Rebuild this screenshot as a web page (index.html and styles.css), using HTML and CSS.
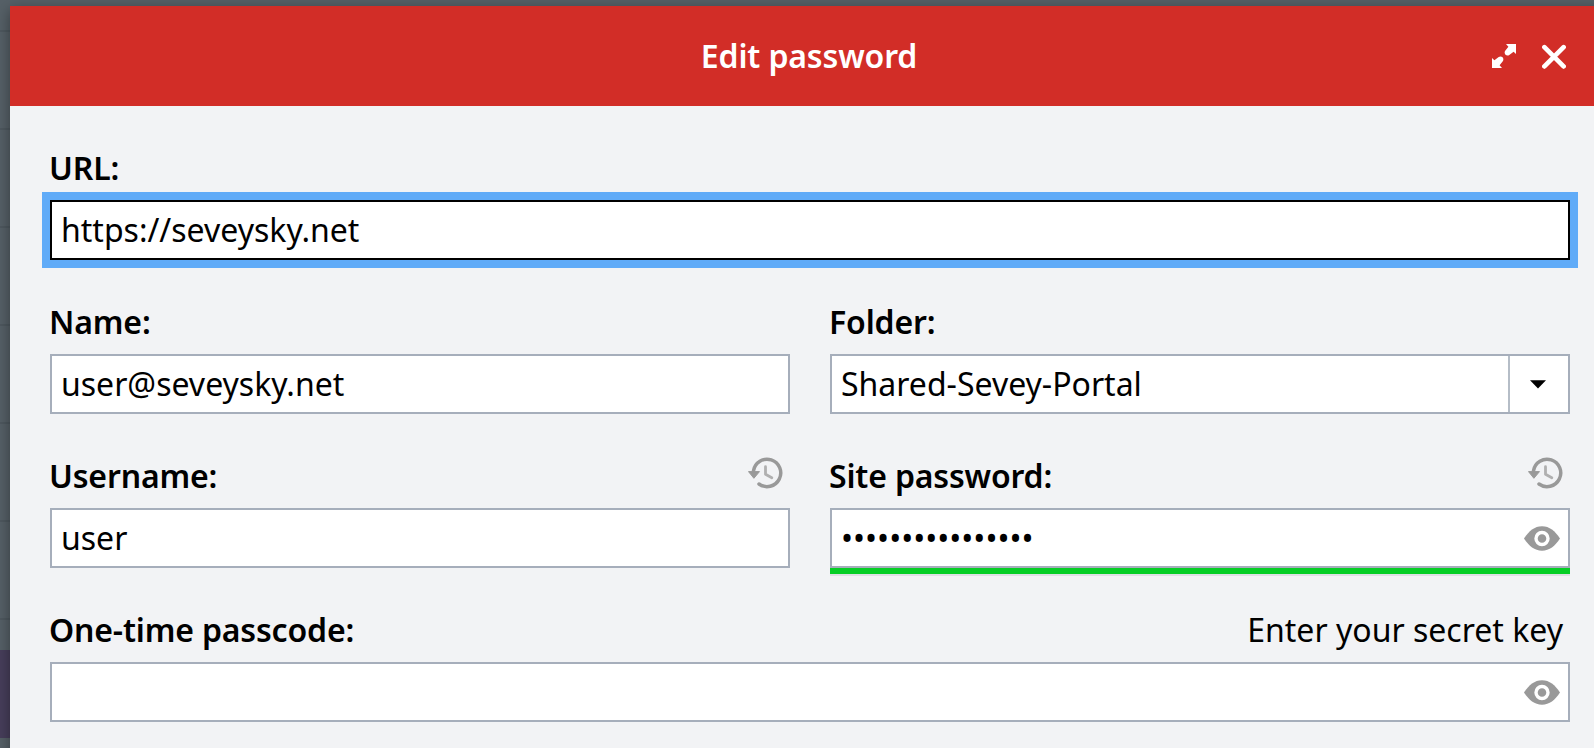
FILE: index.html
```html
<!DOCTYPE html>
<html lang="en">
<head>
<meta charset="utf-8">
<title>Edit password</title>
<link rel="stylesheet" href="styles.css">
</head>
<body>
<svg class="defs" width="0" height="0" aria-hidden="true">
  <symbol id="history" viewBox="0 0 36 32">
    <path d="M5.500 13.700A13.700 13.700 0 1 1 11 27" fill="none" stroke="#999" stroke-width="3.500" stroke-linecap="round"/>
    <path d="M.5 14.600h11L5.900 21.300z" fill="#999" stroke="#999" stroke-width="1" stroke-linejoin="round"/>
    <path d="M17.500 9.700v7.600l6.300 3.500" fill="none" stroke="#b0b0b0" stroke-width="2.800" stroke-linecap="round" stroke-linejoin="round"/>
  </symbol>
  <symbol id="eye" viewBox="0 0 36 25">
    <path d="M0 12.500C5 5 10.500 .3 18 .3S31 5 36 12.500C31 20 25.500 24.700 18 24.700S5 20 0 12.500z" fill="#999"/>
    <circle cx="18" cy="12.500" r="6" fill="#999" stroke="#fff" stroke-width="3.400"/>
  </symbol>
</svg>
<div class="backdrop">
  <div class="selected-row"></div>
  <main class="dialog">
    <header class="dialog-header">
      <h1 class="title">Edit password</h1>
      <div class="actions">
        <svg width="24" height="24" viewBox="0 0 24 24"><path d="M14 0H24v10L21.600 7.700l-4.300 3.200c-1.200.9-2.800.8-3.800-.2s-1.200-2.700-.3-3.900L16.400 2.700zM10 24H0V14L2.400 16.300l4.300-3.200c1.200-.9 2.800-.8 3.800.2s1.200 2.700.3 3.900L7.600 21.300z" fill="#fff"/></svg>
        <svg width="24" height="25" viewBox="0 0 24 25"><path d="M2.400 3.200 21.600 22.400M21.600 3.200 2.400 22.400" stroke="#fff" stroke-width="4.700" stroke-linecap="round"/></svg>
      </div>
    </header>
    <form class="form">
      <div class="field wide">
        <div class="label-row"><label class="label">URL:</label></div>
        <div class="input focused">https://seveysky.net</div>
      </div>
      <div class="field">
        <div class="label-row"><label class="label">Name:</label></div>
        <div class="input">user@seveysky.net</div>
      </div>
      <div class="field">
        <div class="label-row"><label class="label">Folder:</label></div>
        <div class="input">Shared-Sevey-Portal
          <span class="toggle"><svg width="16" height="9" viewBox="0 0 16 9"><path d="M0 .3h16L8 8.500z"/></svg></span>
        </div>
      </div>
      <div class="field">
        <div class="label-row"><label class="label">Username:</label><svg class="history" width="36" height="32"><use href="#history"/></svg></div>
        <div class="input">user</div>
      </div>
      <div class="field">
        <div class="label-row"><label class="label">Site password:</label><svg class="history" width="36" height="32"><use href="#history"/></svg></div>
        <div class="input strong">••••••••••••••••<svg class="eye" width="36" height="25"><use href="#eye"/></svg></div>
      </div>
      <div class="field wide">
        <div class="label-row"><label class="label">One-time passcode:</label><span class="hint">Enter your secret key</span></div>
        <div class="input"><svg class="eye" width="36" height="25"><use href="#eye"/></svg></div>
      </div>
    </form>
  </main>
</div>
</body>
</html>
```

FILE: styles.css
```css
* { box-sizing: border-box; }
body {
  margin: 0;
  overflow: hidden;
  font: 32px/44px "Noto Sans", "Open Sans", sans-serif;
  color: #000;
}
.defs { position: absolute; }
.backdrop {
  position: relative;
  height: 748px;
  padding: 6px 0 0 10px;
  overflow: hidden;
  background: repeating-linear-gradient(#566067 0 96px, #4e585f 96px 98px) 0 -66px;
}
.selected-row {
  position: absolute;
  top: 650px;
  left: 0;
  width: 10px;
  height: 88px;
  background: #473e5b;
}
.dialog {
  position: relative;
  width: 1600px;
  height: 780px;
  background: #f2f3f5;
  box-shadow: 0 4px 14px rgba(0, 0, 0, .4);
}
.dialog-header {
  display: grid;
  grid-template-columns: 1fr auto 1fr;
  align-items: center;
  height: 100px;
  padding: 0 44px;
  background: #d22d27;
  color: #fff;
}
.title {
  grid-column: 2;
  margin: 0;
  padding-right: 2px;
  font: inherit;
  font-weight: 600;
  letter-spacing: -.14px;
}
.actions { display: flex; justify-content: flex-end; gap: 26px; }
.form {
  display: grid;
  grid-template-columns: 1fr 1fr;
  gap: 40px;
  padding: 40px;
}
.wide { grid-column: span 2; }
.label-row {
  display: flex;
  justify-content: space-between;
  height: 44px;
  margin-bottom: 10px;
}
.label { margin-left: -1px; font-weight: 600; letter-spacing: -.16px; }
.hint { padding-right: 7px; }
.history { margin: 3px 6px 0 0; }
.input {
  display: flex;
  align-items: center;
  justify-content: space-between;
  height: 60px;
  padding-left: 9px;
  border: 2px solid #a6aebb;
  background: #fff;
}
.focused { border-color: #000; box-shadow: 0 0 0 8px #60abf8; }
.strong { box-shadow: 0 6px #06ce25, 0 8px #dfdfe4; }
.toggle {
  display: flex;
  align-items: center;
  justify-content: center;
  width: 60px;
  height: 56px;
  padding-right: 2px;
  border-left: 2px solid #b5bdc7;
}
.eye { margin: 1px 8px 0 auto; }
```
